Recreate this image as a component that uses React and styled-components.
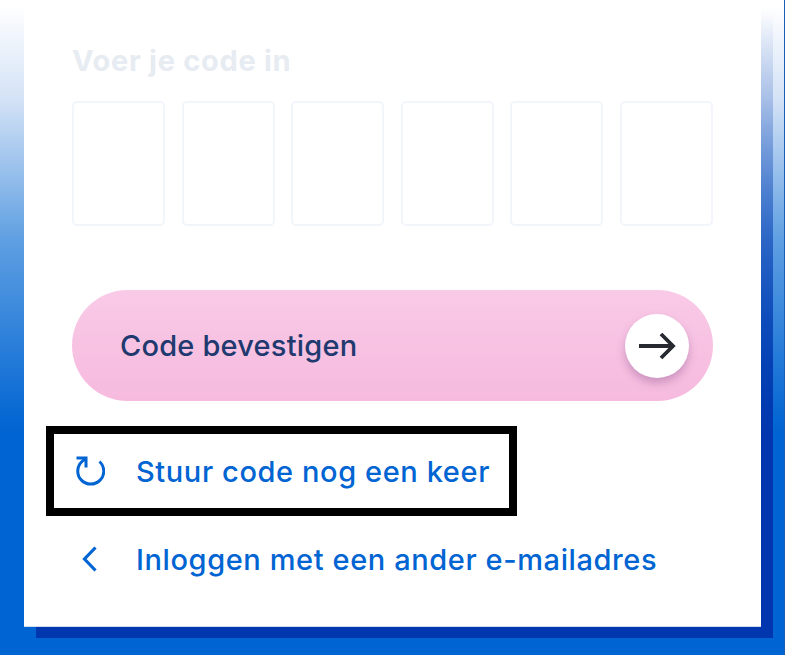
import React from "react";
import styled, { createGlobalStyle } from "styled-components";

const Global = createGlobalStyle`
  html, body { margin: 0; padding: 0; background: #fff; }
  body { width: 785px; height: 655px; overflow: hidden; font-family: "Inter", "Noto Sans", sans-serif; }
`;

const Stage = styled.div`
  width: 785px;
  height: 655px;
  box-sizing: border-box;
  padding: 0 24px 28px;
  border-right: 1px solid #1d5fb4;
  background: linear-gradient(180deg, #ffffff 0px, #ffffff 5px, #d3e2f6 100px, #5f9fe2 240px, #0064d2 430px);
`;

const Card = styled.main`
  position: relative;
  height: 627px;
  width: 737px;
  box-sizing: border-box;
  padding: 43px 48px 0;
  display: flex;
  flex-direction: column;
  &::before {
    content: "";
    position: absolute;
    left: 12px;
    right: -12px;
    top: 12px;
    bottom: -11px;
    z-index: 0;
    background: linear-gradient(180deg, rgba(0,55,174,0) 0px, rgba(0,55,174,1) 420px);
  }
  &::after {
    content: "";
    position: absolute;
    inset: 0;
    background: #fff;
    border-bottom: 1px solid #cfdcf2;
    z-index: 0;
  }
  & > * { position: relative; z-index: 1; }
`;

const Title = styled.h1`
  margin: 0;
  font-size: 29px;
  line-height: 36px;
  font-weight: 700;
  color: #e7ebf2;
  letter-spacing: 0.7px;
`;

const CodeRow = styled.div`
  display: grid;
  grid-template-columns: repeat(6, 93px);
  justify-content: space-between;
  margin-top: 22px;
`;

const CodeBox = styled.div`
  height: 125px;
  box-sizing: border-box;
  border: 2px solid #f2f5fb;
  border-radius: 5px;
`;

const Confirm = styled.button`
  display: flex;
  align-items: center;
  justify-content: space-between;
  height: 111px;
  margin-top: 64px;
  padding: 0 24px 0 48px;
  border: 0;
  border-radius: 56px;
  background: linear-gradient(180deg, #f9cae7 0%, #f6bade 100%);
  color: #20396f;
  font: 500 29px "Inter", sans-serif;
  letter-spacing: 0.2px;
`;

const ArrowDisc = styled.span`
  width: 64px;
  height: 64px;
  border-radius: 50%;
  background: #fff;
  display: flex;
  align-items: center;
  justify-content: center;
  box-shadow: 0 5px 9px rgba(120, 70, 130, 0.35);
`;

const LinkRow = styled.a`
  display: flex;
  align-items: center;
  gap: 28px;
  color: #0064d2;
  font-size: 29px;
  font-weight: 500;
  letter-spacing: 0.6px;
  white-space: nowrap;
`;

const Focused = styled(LinkRow)`
  align-self: flex-start;
  box-sizing: border-box;
  height: 90px;
  margin: 25px 0 0 -26px;
  padding: 0 19px 0 18px;
  border: 8px solid #000;
`;

const Plain = styled(LinkRow)`
  margin-top: 21px;
  height: 44px;
`;

const IconSlot = styled.span`
  width: 36px;
  display: flex;
  justify-content: center;
  flex: none;
`;

export default function App() {
  return (
    <Stage>
      <Global />
      <Card>
        <Title>Voer je code in</Title>
        <CodeRow>
          {[0, 1, 2, 3, 4, 5].map((i) => (
            <CodeBox key={i} />
          ))}
        </CodeRow>
        <Confirm type="button">
          Code bevestigen
          <ArrowDisc>
            <svg width="38" height="28" viewBox="0 0 38 28" fill="none" stroke="#262a30" strokeWidth="3.8">
              <path d="M1 14H35" />
              <path d="M23 2l12 12-12 12" />
            </svg>
          </ArrowDisc>
        </Confirm>
        <Focused>
          <IconSlot>
            <svg width="30" height="30" viewBox="0 0 30 30" fill="none" stroke="#0064d2" strokeWidth="3">
              <path d="M24.5 5.5a13 13 0 1 1-17.5 0L11 2" />
              <path d="M1.5 2H11v9.5" />
            </svg>
          </IconSlot>
          Stuur code nog een keer
        </Focused>
        <Plain>
          <IconSlot>
            <svg width="16" height="26" viewBox="0 0 16 26" fill="none" stroke="#0064d2" strokeWidth="3.2">
              <path d="M13.5 1.5 2.5 13l11 11.5" />
            </svg>
          </IconSlot>
          Inloggen met een ander e-mailadres
        </Plain>
      </Card>
    </Stage>
  );
}
